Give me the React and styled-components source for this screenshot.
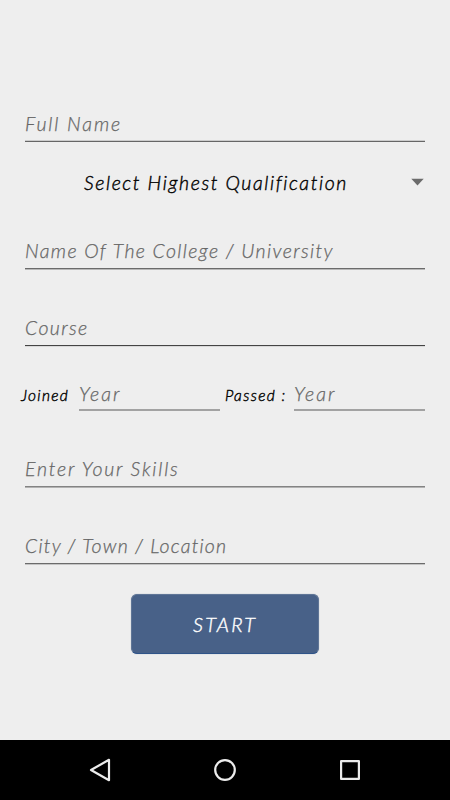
import React from 'react';
import styled, { createGlobalStyle } from 'styled-components';

const GlobalStyle = createGlobalStyle`
    * {
        box-sizing: border-box;
    }
    body {
        margin: 0;
        background-color: #eeeeee;
    }
`;

const StyledScreen = styled.div`
    display: flex;
    flex-direction: column;
    width: 450px;
    height: 800px;
    background-color: #eeeeee;
    font-family: Lato, "Open Sans", sans-serif;
    font-style: italic;
    font-weight: 300;
    .form {
        flex: 1;
        display: flex;
        flex-direction: column;
        padding: 100px 25px 0;
    }
`;

const Field = styled.div`
    display: flex;
    flex-direction: column;
    justify-content: flex-end;
    flex: none;
    width: ${props => props.$width || '100%'};
    height: ${props => props.$height || '77px'};
`;

const Hint = styled.span`
    margin-bottom: ${props => props.$gap || '4px'};
    font-size: 19.5px;
    line-height: 26px;
    letter-spacing: ${props => props.$spacing || '1px'};
    white-space: nowrap;
    color: #666666;
    -webkit-text-stroke: 0.25px #666666;
`;

const Line = styled.div`
    height: 2px;
    border-top: 1px solid ${props => props.$top};
    border-bottom: 1px solid ${props => props.$bottom};
`;

const Select = styled.div`
    display: flex;
    align-items: center;
    height: 32px;
    margin-top: 25px;
    padding-left: 59px;
    color: #000000;
    font-size: 19.5px;
    line-height: 26px;
    letter-spacing: ${props => props.$spacing};
    white-space: nowrap;
    -webkit-text-stroke: 0.4px #000000;
    svg {
        margin-left: auto;
        margin-right: 1px;
        margin-bottom: 2px;
    }
`;

const YearRow = styled.div`
    display: flex;
    align-items: flex-end;
    height: 64px;
    margin-left: -4px;
`;

const YearLabel = styled.span`
    width: ${props => props.$width};
    margin-left: ${props => props.$left || '0'};
    padding-bottom: 5px;
    font-size: 15.5px;
    line-height: 22px;
    letter-spacing: ${props => props.$spacing};
    white-space: nowrap;
    color: #000000;
    -webkit-text-stroke: 0.4px #000000;
`;

const StartButton = styled.button`
    align-self: center;
    width: 188px;
    height: 60px;
    margin-top: 29px;
    padding: 0;
    border: 1px solid #5f7596;
    border-bottom: 1px solid #2f5489;
    border-radius: 6px;
    background-color: #486188;
    box-shadow: 0 0 1px #8795ac;
    color: #ffffff;
    font-family: inherit;
    font-style: italic;
    font-weight: 300;
    font-size: 20px;
    letter-spacing: 2.2px;
    -webkit-text-stroke: 0.4px #ffffff;
`;

const NavBar = styled.div`
    display: flex;
    align-items: center;
    justify-content: space-between;
    height: 60px;
    padding: 0 87px;
    background-color: #000000;
`;

const App = () => {
    return (
        <>
            <GlobalStyle />
            <StyledScreen>
                <div className="form">
                    <Field $height="42px">
                        <Hint $spacing="1.9px" $gap="3px">Full Name</Hint>
                        <Line $top="#cccccc" $bottom="#666666" />
                    </Field>
                    <Select $spacing="1.6px">
                        Select Highest Qualification
                        <svg width="13" height="8" viewBox="0 0 13 8">
                            <path d="M0.3 0.8H12.7L6.5 7.4Z" fill="#6b6b6b" />
                        </svg>
                    </Select>
                    <Field $height="71px">
                        <Hint $spacing="1.37px">Name Of The College / University</Hint>
                        <Line $top="#6b6b6b" $bottom="#b8b8b8" />
                    </Field>
                    <Field>
                        <Hint $spacing="1.4px">Course</Hint>
                        <Line $top="#444444" $bottom="#d8d8d8" />
                    </Field>
                    <YearRow>
                        <YearLabel $width="58px" $spacing="1.3px">Joined</YearLabel>
                        <Field $width="141px" $height="64px">
                            <Hint $spacing="2.1px" $gap="2px">Year</Hint>
                            <Line $top="#a2a2a2" $bottom="#a2a2a2" />
                        </Field>
                        <YearLabel $left="5px" $width="69px" $spacing="1.4px">Passed :</YearLabel>
                        <Field $width="131px" $height="64px">
                            <Hint $spacing="2.1px" $gap="2px">Year</Hint>
                            <Line $top="#a2a2a2" $bottom="#a2a2a2" />
                        </Field>
                    </YearRow>
                    <Field>
                        <Hint $spacing="1.8px">Enter Your Skills</Hint>
                        <Line $top="#838383" $bottom="#b2b2b2" />
                    </Field>
                    <Field>
                        <Hint $spacing="1.2px">City / Town / Location</Hint>
                        <Line $top="#6b6b6b" $bottom="#c4c4c4" />
                    </Field>
                    <StartButton>START</StartButton>
                </div>
                <NavBar>
                    <svg width="26" height="26" viewBox="0 0 26 26" fill="none" stroke="#ececec" strokeWidth="2.2">
                        <path d="M22 2.8V23.2L4 13Z" strokeLinejoin="round" />
                    </svg>
                    <svg width="26" height="26" viewBox="0 0 26 26" fill="none" stroke="#ececec" strokeWidth="2.2">
                        <circle cx="13" cy="13" r="9.8" />
                    </svg>
                    <svg width="26" height="26" viewBox="0 0 26 26" fill="none" stroke="#ececec" strokeWidth="2.2">
                        <rect x="4.1" y="4.1" width="17.8" height="17.8" strokeLinejoin="round" />
                    </svg>
                </NavBar>
            </StyledScreen>
        </>
    );
}

export default App
